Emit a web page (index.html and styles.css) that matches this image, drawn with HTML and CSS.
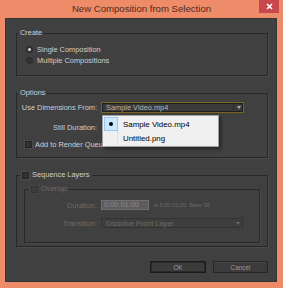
FILE: index.html
```html
<!DOCTYPE html>
<html lang="en">

<head>
    <meta charset="UTF-8">
    <meta name="viewport" content="width=device-width, initial-scale=1.0">
    <title>New Composition from Selection</title>
    <link rel="stylesheet" href="styles.css">
</head>

<body>
    <div class="window">
        <div class="titlebar">
            <span class="title">New Composition from Selection</span>
            <span class="close">
                <svg width="7" height="7" viewBox="0 0 7 7"><path d="M1 1L6 6M6 1L1 6" stroke="#fff" stroke-width="1.6"/></svg>
            </span>
        </div>
        <div class="content">
            <fieldset class="group create">
                <legend>Create</legend>
                <div class="group-body">
                    <div class="radio-row"><span class="radio checked"></span>Single Composition</div>
                    <div class="radio-row"><span class="radio"></span>Multiple Compositions</div>
                </div>
            </fieldset>

            <fieldset class="group options">
                <legend>Options</legend>
                <div class="group-body">
                    <div class="field-row">
                        <span class="field-label">Use Dimensions From:</span>
                        <div class="select focused">
                            <span>Sample Video.mp4</span>
                            <span class="select-arrow"></span>
                            <div class="menu">
                                <div class="menu-item">
                                    <span class="menu-check active"><span class="bullet"></span></span>
                                    <span>Sample Video.mp4</span>
                                </div>
                                <div class="menu-item">
                                    <span class="menu-check"></span>
                                    <span>Untitled.png</span>
                                </div>
                            </div>
                        </div>
                    </div>
                    <div class="field-row still">
                        <span class="field-label">Still Duration:</span>
                    </div>
                    <div class="check-row render">
                        <span class="checkbox"></span>Add to Render Queue
                    </div>
                </div>
            </fieldset>

            <fieldset class="group sequence">
                <legend class="check-legend"><span class="checkbox"></span>Sequence Layers</legend>
                <div class="group-body">
                    <fieldset class="group overlap">
                        <legend class="check-legend"><span class="checkbox"></span>Overlap</legend>
                        <div class="group-body">
                            <div class="field-row">
                                <span class="field-label">Duration:</span>
                                <span class="timecode">0:00:01:00</span>
                                <span class="timecode-note">is 0:00:01:00 &nbsp;Base 30</span>
                            </div>
                            <div class="field-row transition">
                                <span class="field-label">Transition:</span>
                                <div class="select">
                                    <span>Dissolve Front Layer</span>
                                    <span class="select-arrow"></span>
                                </div>
                            </div>
                        </div>
                    </fieldset>
                </div>
            </fieldset>

            <div class="buttons">
                <button class="btn default">OK</button>
                <button class="btn">Cancel</button>
            </div>
        </div>
    </div>
</body>

</html>
```

FILE: styles.css
```css
html,
body {
    margin: 0;
    padding: 0;
}

body {
    width: 283px;
    height: 288px;
    overflow: hidden;
    background-color: #ee8b68;
    font-family: "Liberation Sans", Arial, sans-serif;
}

.window {
    display: flex;
    flex-direction: column;
    width: 283px;
    height: 288px;
}

.titlebar {
    position: relative;
    height: 18px;
    display: flex;
    align-items: center;
    justify-content: center;
}

.title {
    font-size: 9.6px;
    color: #4a2c1e;
    margin-top: -1px;
}

.close {
    position: absolute;
    top: 0;
    right: 4px;
    width: 20px;
    height: 13px;
    background-color: #c8474c;
    display: flex;
    align-items: center;
    justify-content: center;
}

.content {
    margin: 0 6px 6px 5px;
    height: 264px;
    box-sizing: border-box;
    padding: 10px 9px 0 11px;
    background-color: #404040;
    box-shadow: inset 0 0 0 1px #363636;
    font-size: 7.4px;
    color: #cfcfcf;
}

.group {
    margin: 0;
    padding: 0;
    border: 1px solid #282828;
    box-shadow: 1px 1px 0 #4a4a4a;
    min-width: 0;
}

.group > legend {
    margin-left: 1px;
    padding: 0 2px;
    line-height: 10px;
    height: 10px;
}

.check-legend {
    display: flex;
    align-items: center;
}

.sequence > legend.check-legend {
    margin-left: 3px;
}

.overlap > legend.check-legend {
    margin-left: 4px;
    color: #6b6b6b;
}

/* create */
.create .group-body {
    padding: 6px 0 9px 9px;
}

.radio-row {
    display: flex;
    align-items: center;
    height: 11px;
}

.radio {
    width: 7px;
    height: 7px;
    box-sizing: border-box;
    border-radius: 50%;
    border: 1px solid #2a2a2a;
    background-color: #333;
    margin-right: 4px;
    display: flex;
    align-items: center;
    justify-content: center;
}

.radio.checked::after {
    content: "";
    width: 3px;
    height: 3px;
    border-radius: 50%;
    background-color: #d8d8d8;
}

/* options */
.options {
    margin-top: 12px;
}

.options .group-body {
    padding: 4px 0 7px 0;
}

.field-row {
    display: flex;
    align-items: center;
    height: 11px;
}

.field-label {
    width: 80px;
    text-align: right;
    margin-right: 4px;
    flex: none;
}

.still {
    margin-top: 9px;
}

.check-row {
    display: flex;
    align-items: center;
    height: 11px;
}

.render {
    margin-top: 6px;
    padding-left: 8px;
}

.checkbox {
    width: 7px;
    height: 7px;
    box-sizing: border-box;
    border: 1px solid #232323;
    background-color: #323232;
    box-shadow: 0 0 0 1px #4c4c4c;
    margin-right: 3px;
    flex: none;
}

.select {
    position: relative;
    width: 143px;
    height: 11px;
    box-sizing: border-box;
    border: 1px solid #2c2c2c;
    background-color: #3a3a3a;
    display: flex;
    align-items: center;
    padding-left: 4px;
    color: #b4b4b4;
}

.select.focused {
    border-color: #7a6420;
    box-shadow: inset 0 0 0 1px #1f1f1f;
}

.select-arrow {
    margin-left: auto;
    width: 9px;
    height: 100%;
    border-left: 1px solid #2c2c2c;
    display: flex;
    align-items: center;
    justify-content: center;
}

.select-arrow::after {
    content: "";
    border-left: 2.5px solid transparent;
    border-right: 2.5px solid transparent;
    border-top: 3px solid #b0b0b0;
}

.menu {
    position: absolute;
    top: 12px;
    left: 0;
    width: 117px;
    padding: 1px;
    box-sizing: border-box;
    background-color: #f0f0f0;
    border: 1px solid #a0a0a0;
    box-shadow: 2px 2px 3px rgba(0, 0, 0, 0.45);
    color: #000;
    font-size: 7.9px;
    z-index: 2;
}

.menu-item {
    display: flex;
    align-items: center;
    height: 14px;
}

.menu-check {
    width: 14px;
    height: 14px;
    box-sizing: border-box;
    margin-right: 5px;
    display: flex;
    align-items: center;
    justify-content: center;
    border-right: 1px solid #e2e2e2;
}

.menu-check.active {
    background-color: #cce8ff;
    border: 1px solid #99c9ef;
}

.bullet {
    width: 4px;
    height: 4px;
    border-radius: 50%;
    background-color: #000;
}

/* sequence */
.sequence {
    margin-top: 12px;
}

.sequence > .group-body {
    padding: 4px 7px 3px 7px;
}

.overlap {
    color: #6b6b6b;
}

.overlap .checkbox {
    background-color: #3c3c3c;
    border-color: #333;
    box-shadow: 0 0 0 1px #474747;
}

.overlap .group-body {
    padding: 6px 0 14px 0;
}

.overlap .field-row {
    height: 10px;
}

.overlap .field-label {
    width: 72px;
}

.timecode {
    width: 48px;
    height: 10px;
    box-sizing: border-box;
    border: 1px solid #707070;
    background-color: #5c5c5c;
    color: #8e8e8e;
    padding-left: 2px;
    line-height: 8px;
}

.timecode-note {
    margin-left: 5px;
    font-size: 5.6px;
}

.transition {
    margin-top: 8px;
}

.transition .select {
    width: 142px;
    height: 10px;
    border-color: #333;
    background-color: #3e3e3e;
    color: #6b6b6b;
}

.transition .select-arrow {
    border-left: none;
}

.transition .select-arrow::after {
    border-top-color: #6b6b6b;
}

/* buttons */
.buttons {
    display: flex;
    justify-content: flex-end;
    gap: 7px;
    margin-top: 14px;
}

.btn {
    width: 55px;
    height: 12px;
    padding: 0;
    border: 1px solid #262626;
    background-color: #3b3b3b;
    color: #9a9a9a;
    font-family: "Liberation Sans", Arial, sans-serif;
    font-size: 6.4px;
    box-shadow: inset 0 1px 0 #494949;
}

.btn.default {
    width: 56px;
    border-color: #1a1a1a;
    box-shadow: inset 0 0 0 1px #2a2a2a;
}
```
